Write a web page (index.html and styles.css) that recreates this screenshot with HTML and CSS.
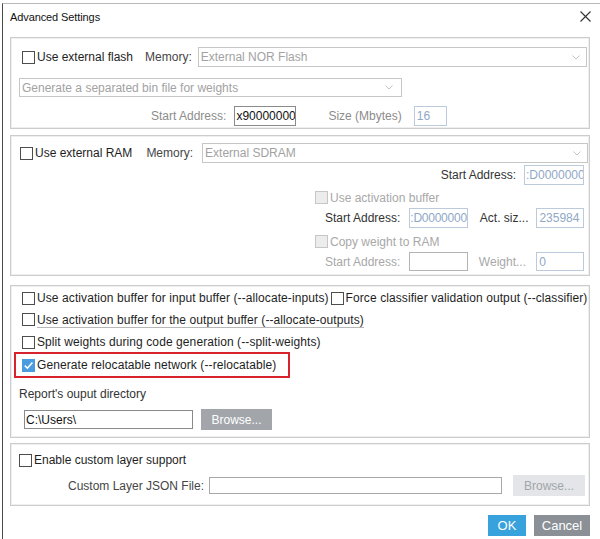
FILE: index.html
```html
<!DOCTYPE html>
<html>
<head>
<meta charset="utf-8">
<link rel="stylesheet" href="styles.css">
</head>
<body>
<div class="window">
  <div class="titlebar">
    <span class="title">Advanced Settings</span>
    <svg class="close" width="11" height="11" viewBox="0 0 11 11"><path d="M0.5 0.5 L10.5 10.5 M10.5 0.5 L0.5 10.5" stroke="#333" stroke-width="1.1" fill="none"/></svg>
  </div>

  <div class="group g1">
    <div class="row r-flash">
      <span class="cb"></span><span class="lbl dark">Use external flash</span>
      <span class="lbl mem mem1">Memory:</span>
      <div class="select sel-mem1"><span>External NOR Flash</span><svg class="chev" width="8" height="5" viewBox="0 0 8 5"><path d="M0.5 0.5 L4 4 L7.5 0.5" stroke="#c4c4c4" fill="none"/></svg></div>
    </div>
    <div class="row r-bin">
      <div class="select sel-bin"><span>Generate a separated bin file for weights</span><svg class="chev" width="8" height="5" viewBox="0 0 8 5"><path d="M0.5 0.5 L4 4 L7.5 0.5" stroke="#c4c4c4" fill="none"/></svg></div>
    </div>
    <div class="row r-addr1">
      <span class="lbl grey">Start Address:</span>
      <div class="input in-addr1">x90000000</div>
      <span class="lbl grey size-lbl">Size (Mbytes)</span>
      <div class="input dis in-size">16</div>
    </div>
  </div>

  <div class="group g2">
    <div class="row r-ram">
      <span class="cb"></span><span class="lbl dark">Use external RAM</span>
      <span class="lbl mem mem2">Memory:</span>
      <div class="select sel-mem2"><span>External SDRAM</span><svg class="chev" width="8" height="5" viewBox="0 0 8 5"><path d="M0.5 0.5 L4 4 L7.5 0.5" stroke="#c4c4c4" fill="none"/></svg></div>
    </div>
    <div class="row r-addr2">
      <span class="lbl mid">Start Address:</span>
      <div class="input dis in-d0">:D0000000</div>
    </div>
    <div class="sub">
      <div class="row r-act">
        <span class="cb off"></span><span class="lbl light">Use activation buffer</span>
      </div>
      <div class="row r-actaddr">
        <span class="lbl mid sublbl">Start Address:</span>
        <div class="input dis in-sub tight">:D0000000</div>
        <span class="lbl mid small-lbl">Act. siz...</span>
        <div class="input dis in-small">235984</div>
      </div>
      <div class="row r-copy">
        <span class="cb off"></span><span class="lbl light">Copy weight to RAM</span>
      </div>
      <div class="row r-copyaddr">
        <span class="lbl light sublbl">Start Address:</span>
        <div class="input plain in-sub"></div>
        <span class="lbl light small-lbl2">Weight...</span>
        <div class="input dis in-small">0</div>
      </div>
    </div>
  </div>

  <div class="group g3">
    <div class="row r-o1">
      <span class="cb"></span><span class="lbl dark">Use activation buffer for input buffer (--allocate-inputs)</span>
      <span class="cb cb2"></span><span class="lbl dark">Force classifier validation output (--classifier)</span>
    </div>
    <div class="row r-o2">
      <span class="cb"></span><span class="lbl dark focus">Use activation buffer for the output buffer (--allocate-outputs)</span>
    </div>
    <div class="row r-o3">
      <span class="cb"></span><span class="lbl dark">Split weights during code generation (--split-weights)</span>
    </div>
    <div class="row r-o4">
      <span class="cb on"><svg width="13" height="13" viewBox="0 0 13 13"><rect x="0" y="0" width="13" height="13" fill="#4a9be0"/><path d="M2.8 6.6 L5.4 9.2 L10.4 3.4" stroke="#fff" stroke-width="1.6" fill="none"/></svg></span><span class="lbl dark">Generate relocatable network (--relocatable)</span>
    </div>
    <div class="row r-rep">
      <span class="lbl mid">Report's ouput directory</span>
    </div>
    <div class="row r-dir">
      <div class="input dirin">C:\Users\</div>
      <div class="btn browse">Browse...</div>
    </div>
  </div>

  <div class="group g4">
    <div class="row r-cust">
      <span class="cb"></span><span class="lbl dark">Enable custom layer support</span>
    </div>
    <div class="row r-json">
      <span class="lbl mem json-lbl">Custom Layer JSON File:</span>
      <div class="input jsonin"></div>
      <div class="btn browse2">Browse...</div>
    </div>
  </div>

  <div class="footer">
    <div class="btn ok">OK</div>
    <div class="btn cancel">Cancel</div>
  </div>
</div>
</body>
</html>
```

FILE: styles.css
```css
html, body {
  margin: 0;
  padding: 0;
  background: #fff;
}
body {
  font-family: "Liberation Sans", Arial, sans-serif;
  font-size: 12px;
  color: #222;
}
.window {
  margin: 3px 0 0 2px;
  height: 536px;
  box-sizing: border-box;
  border-top: 1px solid #b9b9b9;
  border-left: 1px solid #4a4a4a;
  background: #fff;
}
.titlebar {
  height: 25px;
  display: flex;
  align-items: center;
  justify-content: space-between;
  padding: 0 9px 0 7px;
}
.title {
  font-size: 11px;
  color: #111;
  letter-spacing: -0.1px;
}
.close { display: block; margin-top: 0; }

.group {
  margin-left: 7px;
  width: 580px;
  box-sizing: border-box;
  border: 1px solid #cdcdcd;
  box-shadow: inset 0 0 0 1px #efefef;
}
.row {
  display: flex;
  align-items: center;
  white-space: nowrap;
}
.lbl { line-height: 14px; }
.dark { color: #1e1e1e; }
.mid { color: #333; }
.grey { color: #8c8c8c; }
.light { color: #a8a8a8; }
.mem { color: #454545; }

.cb {
  width: 13px;
  height: 13px;
  box-sizing: border-box;
  border: 1px solid #4d4d4d;
  background: #fff;
  margin-right: 2px;
  flex: none;
}
.cb.off {
  border-color: #c6c6c6;
  background: #ececec;
}
.cb.on {
  border: none;
}
.cb.on svg { display: block; }

.select {
  height: 20px;
  box-sizing: border-box;
  border: 1px solid #c6c6c6;
  display: flex;
  align-items: center;
  justify-content: space-between;
  padding: 0 6px 0 2px;
  color: #a2a2a2;
  background: #fff;
}
.chev { display: block; flex: none; }
.input {
  box-sizing: border-box;
  height: 20px;
  border: 1px solid #7a7a7a;
  background: #fff;
  display: flex;
  align-items: center;
  padding-left: 1px;
  color: #111;
  overflow: hidden;
}
.input.dis {
  border-color: #bccadb;
  color: #90a8c6;
}
.input.plain { border-color: #b4b4b4; }
.tight { letter-spacing: -0.25px; padding-left: 0; }
.btn {
  display: flex;
  align-items: center;
  justify-content: center;
  box-sizing: border-box;
}

/* group 1 */
.g1 { margin-top: 8px; height: 92px; }
.r-flash { margin-top: 9px; height: 20px; padding-left: 11px; }
.mem1 { margin-left: 12px; margin-right: 6px; }
.sel-mem1 { width: 389px; }
.r-bin { margin-top: 11px; padding-left: 8px; }
.sel-bin { width: 383px; height: 19px; padding-right: 8px; }
.r-addr1 { margin-top: 9px; height: 20px; padding-left: 140px; }
.in-addr1 { width: 62px; margin-left: 8px; border-color: #8a8a8a; }
.size-lbl { margin-left: 32px; }
.in-size { width: 33px; margin-left: 12px; padding-left: 2px; }

/* group 2 */
.g2 { margin-top: 6px; height: 141px; }
.r-ram { margin-top: 7px; height: 20px; padding-left: 9px; }
.mem2 { margin-left: 14px; margin-right: 9px; }
.sel-mem2 { width: 386px; }
.r-addr2 { margin-top: 2px; height: 20px; justify-content: flex-end; padding-right: 5px; }
.in-d0 { width: 60px; margin-left: 8px; }
.sub { margin-left: 304px; padding-right: 5px; }
.r-act { margin-top: 2px; height: 21px; }
.r-actaddr { height: 20px; padding-left: 10px; }
.sublbl { width: 77px; }
.in-sub { width: 59px; margin-left: 8px; height: 20px; }
.small-lbl { margin-left: 12px; width: 57px; }
.small-lbl2 { margin-left: 11px; width: 58px; }
.in-small { width: 48px; margin-left: 0; padding-left: 2px; }
.r-copy { margin-top: 3px; height: 21px; }
.r-copyaddr { height: 19px; padding-left: 10px; }
.r-copyaddr .input { height: 19px; }

/* group 3 */
.g3 { margin-top: 9px; height: 153px; }
.g3 .dark { letter-spacing: 0.09px; }
.r-o1 { margin-top: 1px; height: 22px; padding-left: 11px; }
.cb2 { margin-left: 2px; }
.r-o2 { height: 21px; padding-left: 11px; }
.focus { border-bottom: 1px solid #b8b8b8; padding-bottom: 0; margin-top: 1px; }
.r-o3 { height: 24px; padding-left: 11px; }
.r-o4 {
  height: 22px;
  width: 272px;
  box-sizing: border-box;
  margin-left: 5px;
  padding-left: 6px;
  outline: 2px solid #d7232e;
}
.r-rep { margin-top: 8px; height: 20px; padding-left: 8px; }
.r-dir { margin-top: 5px; height: 21px; padding-left: 13px; }
.dirin { width: 169px; height: 19px; border-color: #8a8a8a; }
.browse {
  width: 71px;
  height: 21px;
  margin-left: 8px;
  background: #a2a6aa;
  color: #fff;
}

/* group 4 */
.g4 { margin-top: 5px; height: 63px; }
.r-cust { margin-top: 6px; height: 20px; padding-left: 8px; }
.r-json { margin-top: 5px; height: 21px; padding-left: 57px; }
.json-lbl { margin-right: 5px; }
.jsonin { width: 293px; height: 17px; border-color: #a8a8a8; }
.browse2 {
  width: 72px;
  height: 21px;
  margin-left: 11px;
  background: #e3e5e8;
  color: #a2a6aa;
}

/* footer */
.footer {
  margin-top: 9px;
  margin-left: 7px;
  width: 580px;
  display: flex;
  justify-content: flex-end;
  gap: 8px;
}
.ok {
  width: 38px;
  height: 21px;
  background: #37a2db;
  color: #fff;
  font-size: 13px;
}
.cancel {
  width: 56px;
  height: 21px;
  background: #8a9096;
  color: #fff;
  font-size: 13px;
}
```
